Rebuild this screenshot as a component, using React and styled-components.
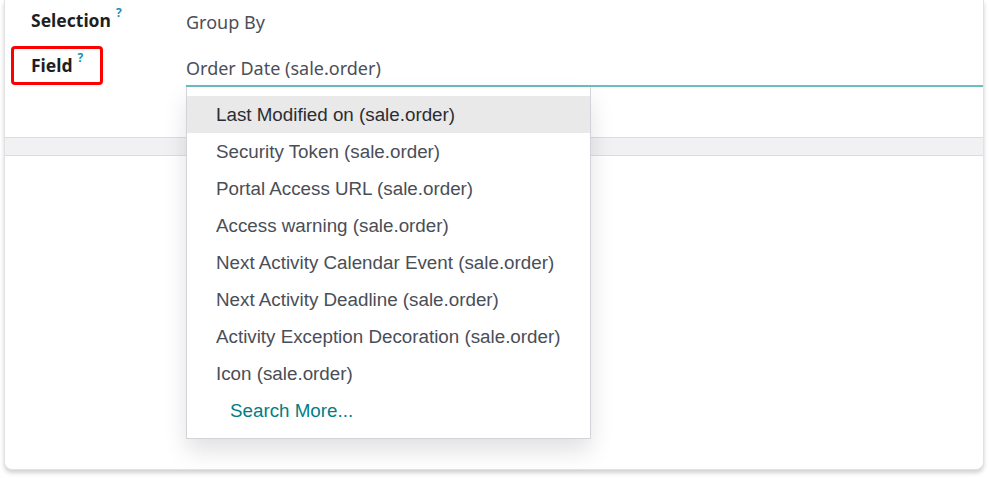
import React from "react";
import styled, { createGlobalStyle } from "styled-components";

const Global = createGlobalStyle`
  html, body { margin: 0; padding: 0; background: #ffffff; }
  body { width: 989px; height: 478px; overflow: hidden; font-family: "Noto Sans", sans-serif; }
`;

const Page = styled.div`
  padding: 0 5px 8px 4px;
  height: 478px;
  box-sizing: border-box;
`;

const Card = styled.div`
  height: 470px;
  background: #fff;
  border: 1px solid #e2e2e2;
  border-top: none;
  border-radius: 0 0 8px 8px;
  box-shadow: 0 3px 4px rgba(0, 0, 0, 0.18);
  display: flex;
  flex-direction: column;
  box-sizing: border-box;
`;

const FormArea = styled.div`
  height: 137px;
  box-sizing: border-box;
  display: grid;
  grid-template-columns: 181px 1fr;
  grid-template-rows: 40px 47px;
  align-content: start;
`;

const LabelCell = styled.div`
  display: flex;
  align-items: ${(p) => (p.$end ? "flex-end" : "center")};
  padding-left: 6px;
  padding-bottom: ${(p) => (p.$end ? 2 : 0)}px;
`;

const LabelBox = styled.div`
  display: inline-flex;
  align-items: flex-start;
  padding: 4px 17px 5px 17px;
  border: 3px solid ${(p) => (p.$highlight ? "#ff0000" : "transparent")};
  border-radius: 4px;
`;

const Label = styled.span`
  font-family: "Noto Sans", sans-serif;
  font-weight: 700;
  font-size: 17.5px;
  line-height: 24px;
  color: #1d1f23;
`;

const Help = styled.sup`
  font-family: "Noto Sans", sans-serif;
  font-weight: 700;
  font-size: 12px;
  line-height: 12px;
  color: #1b8fb3;
  margin-left: 5px;
  position: relative;
  top: -1px;
`;

const ValueCell = styled.div`
  display: flex;
  align-items: center;
  font-family: "Noto Sans", sans-serif;
  font-size: 18px;
  color: #4b4f58;
  padding-top: 4px;
`;

const InputWrap = styled.div`
  position: relative;
  display: flex;
  align-items: flex-end;
`;

const Input = styled.div`
  flex: 1;
  height: 35px;
  display: flex;
  align-items: center;
  border-bottom: 2px solid #6dbcbf;
  font-family: "Noto Sans", sans-serif;
  font-size: 18px;
  color: #4b4f58;
  box-sizing: border-box;
  padding-bottom: 1px;
`;

const Dropdown = styled.ul`
  position: absolute;
  top: 100%;
  left: 0;
  width: 405px;
  margin: 0;
  padding: 9px 0;
  list-style: none;
  background: #fff;
  border: 1px solid #d3d3da;
  border-top: none;
  box-sizing: border-box;
  box-shadow: 0 12px 22px rgba(0, 0, 0, 0.12);
  z-index: 10;
`;

const Item = styled.li`
  height: 37px;
  display: flex;
  align-items: center;
  padding-left: ${(p) => (p.$link ? 43 : 29)}px;
  font-family: "Liberation Sans", Arial, sans-serif;
  font-size: 18.8px;
  color: ${(p) => (p.$link ? "#017e84" : "#4a4e57")};
  background: ${(p) => (p.$active ? "#e9e9e9" : "transparent")};
  ${(p) => p.$active && "color: #2b2d33;"}
`;

const Band = styled.div`
  height: 19px;
  background: #f1f1f4;
  border-top: 1px solid #dcdce0;
  border-bottom: 1px solid #dcdce0;
  box-sizing: border-box;
`;

const Body = styled.div`
  flex: 1;
`;

const items = [
  "Last Modified on (sale.order)",
  "Security Token (sale.order)",
  "Portal Access URL (sale.order)",
  "Access warning (sale.order)",
  "Next Activity Calendar Event (sale.order)",
  "Next Activity Deadline (sale.order)",
  "Activity Exception Decoration (sale.order)",
  "Icon (sale.order)",
];

export default function App() {
  return (
    <>
      <Global />
      <Page>
        <Card>
          <FormArea>
            <LabelCell>
              <LabelBox>
                <Label>Selection</Label>
                <Help>?</Help>
              </LabelBox>
            </LabelCell>
            <ValueCell>Group By</ValueCell>
            <LabelCell $end>
              <LabelBox $highlight>
                <Label>Field</Label>
                <Help>?</Help>
              </LabelBox>
            </LabelCell>
            <InputWrap>
              <Input>Order Date (sale.order)</Input>
              <Dropdown>
                {items.map((t, i) => (
                  <Item key={t} $active={i === 0}>
                    {t}
                  </Item>
                ))}
                <Item $link>Search More...</Item>
              </Dropdown>
            </InputWrap>
          </FormArea>
          <Band />
          <Body />
        </Card>
      </Page>
    </>
  );
}
